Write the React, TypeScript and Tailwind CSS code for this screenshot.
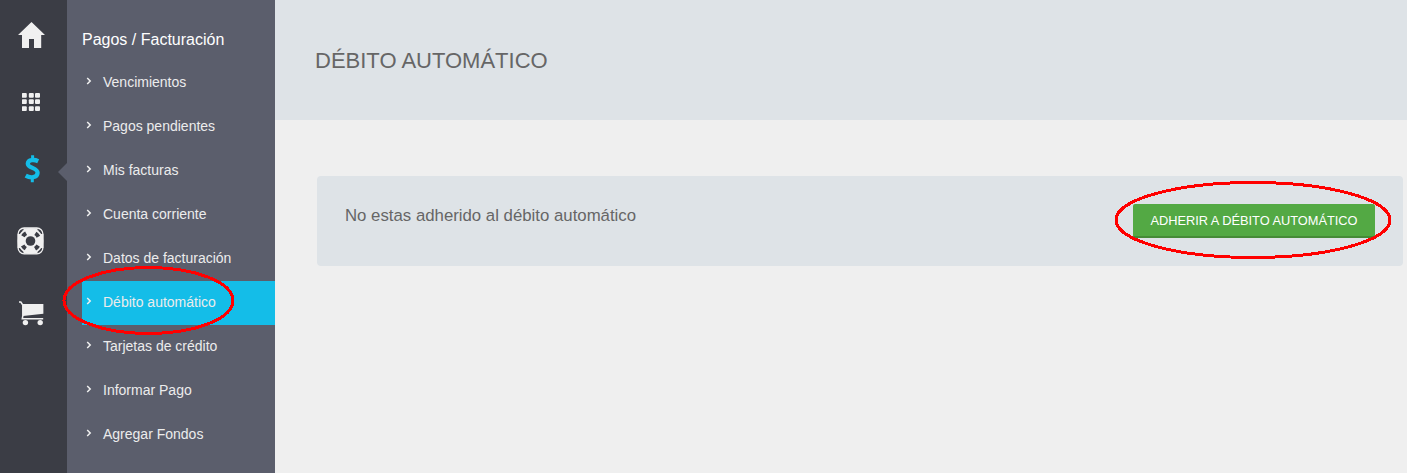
const items = [
  "Vencimientos",
  "Pagos pendientes",
  "Mis facturas",
  "Cuenta corriente",
  "Datos de facturación",
  "Débito automático",
  "Tarjetas de crédito",
  "Informar Pago",
  "Agregar Fondos",
];

const HomeIcon = () => (
  <svg width="27" height="26" viewBox="0 0 27 26" fill="#f0f0f0">
    <path d="M13.5 0 27 13H23.2V26H16V17H11V26H4V13H0Z" />
  </svg>
);

const GridIcon = () => (
  <svg width="19" height="19" viewBox="0 0 19 19" fill="#f0f0f0">
    {[0, 6.3, 13.3].map((y) =>
      [-0.2, 6.8, 13].map((x) => <rect key={`${x}-${y}`} x={x} y={y} width="5" height="4.8" rx="1" />)
    )}
  </svg>
);

const DollarIcon = () => (
  <svg width="17" height="28" viewBox="0 0 17 28" fill="none" stroke="#14bde8">
    <path d="M8.6 .3V5M8.3 22V27.3" strokeWidth="3" />
    <path
      d="M14.2 6.2C10.5 4.4 4 4.2 3.8 8.6C3.6 13 13.7 12.8 13.6 17.8C13.4 23.2 6.2 23.2 1.7 20.7"
      strokeWidth="4.3"
    />
  </svg>
);

const LifeRingIcon = () => (
  <svg width="27" height="28" viewBox="-13.5 -14 27 28">
    <rect x="-12.4" y="-13" width="24.8" height="25.8" rx="6" fill="#3b3d45" stroke="#f0f0f0" strokeWidth="1.3" />
    <circle r="12.8" fill="#f0f0f0" />
    <path d="M-7-12.8H7V12.8H-7ZM-12.8-7H12.8V7H-12.8Z" fill="#f0f0f0" />
    <circle r="9" fill="none" stroke="#3b3d45" strokeWidth="4" strokeDasharray="4.4 9.737" strokeDashoffset="-4.869" />
    <circle r="4.8" fill="#3b3d45" />
  </svg>
);

const CartIcon = () => (
  <svg width="25" height="25" viewBox="0 0 25 25" fill="#f0f0f0">
    <path d="M3.5 3H24.4V12.7L4 15Z" />
    <path d="M0 1H1.8L3.8 4V15L3.3 17.8H24.2" fill="none" stroke="#f0f0f0" strokeWidth="1.5" />
    <circle cx="6.4" cy="21.6" r="2.7" />
    <circle cx="21.2" cy="21.6" r="2.7" />
  </svg>
);

const Chevron = () => (
  <svg className="mb-[5px] ml-1 shrink-0" width="6" height="8" viewBox="0 0 6 8" fill="none" stroke="#f0f0f0" strokeWidth="1.5">
    <path d="M1.2 1 4.2 4 1.2 7" />
  </svg>
);

const App = () => {
  return (
    <div className="relative flex h-[473px] w-[1407px] overflow-hidden bg-[#efefef] font-['Liberation_Sans',Arial,sans-serif]">
      <nav className="relative w-[67px] shrink-0 bg-[#3b3d45]">
        <div className="ml-[18px] mt-[22px]"><HomeIcon /></div>
        <div className="ml-[22px] mt-[45px]"><GridIcon /></div>
        <div className="ml-6 mt-[43px]"><DollarIcon /></div>
        <div className="ml-[17px] mt-[44px]"><LifeRingIcon /></div>
        <div className="ml-[19px] mt-[46px]"><CartIcon /></div>
        <svg className="absolute right-0 top-[163px]" width="9" height="18" viewBox="0 0 9 18" fill="#5b5e6c">
          <path d="M9 0V18L0 9Z" />
        </svg>
      </nav>

      <aside className="w-[208px] shrink-0 bg-[#5b5e6c] pl-[15px]">
        <h2 className="h-[61px] pt-[28px] text-[16px] leading-[24px] text-white">Pagos / Facturación</h2>
        <ul>
          {items.map((item) => (
            <li
              key={item}
              className={`flex h-11 items-center text-[14px] text-[#ececec] ${item === "Débito automático" ? "bg-[#14bde8]" : ""}`}
            >
              <Chevron />
              <span className="ml-[11px] pb-px">{item}</span>
            </li>
          ))}
        </ul>
      </aside>

      <main className="min-w-0 flex-1">
        <header className="flex h-[120px] items-center bg-[#dee3e7] pl-10">
          <h1 className="text-[22px] text-[#666]">DÉBITO AUTOMÁTICO</h1>
        </header>
        <section className="ml-[42px] mr-1 mt-14 flex h-[90px] items-start justify-between rounded-[4px] bg-[#dee3e7] px-7 pt-7">
          <p className="text-[16.8px] leading-[24px] text-[#666]">No estas adherido al débito automático</p>
          <button className="h-[34px] w-[242px] rounded-[2px] border-b-2 border-[#458b37] bg-[#53a944] pt-px text-[12.8px] text-white">
            ADHERIR A DÉBITO AUTOMÁTICO
          </button>
        </section>
      </main>

      {/* hand-drawn highlights */}
      <svg className="pointer-events-none absolute inset-0" width="1407" height="473" fill="none" stroke="#f00" strokeWidth="3" shapeRendering="crispEdges">
        <ellipse cx="148.5" cy="300.5" rx="84.5" ry="33" />
        <ellipse cx="1253" cy="220" rx="137" ry="37.5" />
      </svg>
    </div>
  );
};

export default App;
